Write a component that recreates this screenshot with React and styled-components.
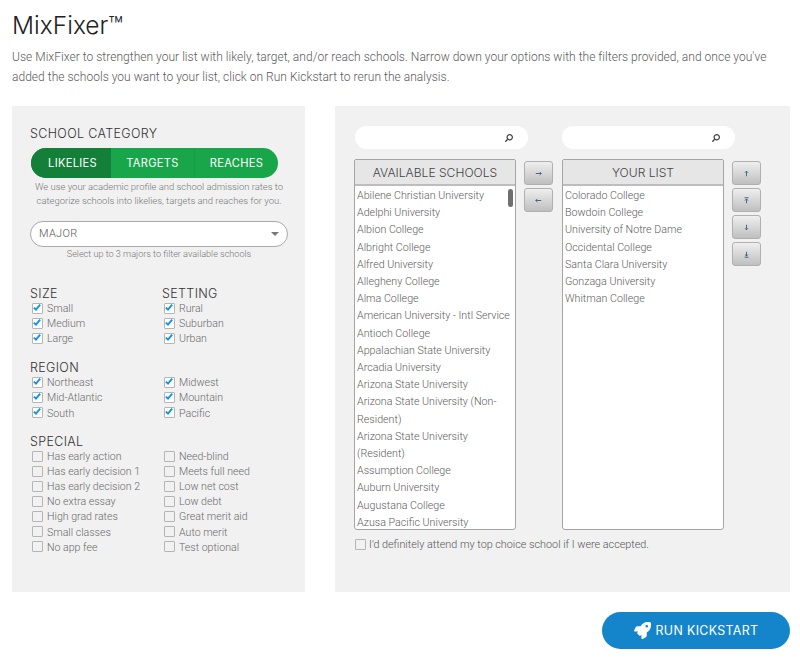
import React from "react";
import styled, { createGlobalStyle } from "styled-components";
import { FaRocket, FaSearch } from "react-icons/fa";

const GlobalStyle = createGlobalStyle`
  html, body {
    margin: 0;
    padding: 0;
    background: #fff;
    font-family: Roboto, "Liberation Sans", sans-serif;
    font-weight: 300;
    color: #555;
  }
`;

const Page = styled.div`
  width: 800px;
  height: 661px;
  padding: 8px 10px 0 12px;
  box-sizing: border-box;
  overflow: hidden;
`;

const Title = styled.h1`
  margin: 0;
  font-family: Inter, sans-serif;
  font-weight: 300;
  font-size: 24.5px;
  line-height: 34px;
  color: #222;
`;

const Intro = styled.p`
  margin: 6px 0 0;
  font-size: 12px;
  line-height: 19.5px;
  letter-spacing: 0.03px;
  color: #5a5a5a;
`;

const Columns = styled.div`
  display: flex;
  gap: 30px;
  margin-top: 19px;
`;

const Panel = styled.section`
  background: #f1f1f1;
  height: 486px;
  box-sizing: border-box;
`;

const FilterPanel = styled(Panel)`
  width: 293px;
  padding: 20px 17px 0 18px;
`;

const SchoolsPanel = styled(Panel)`
  width: 455px;
  padding: 20px 19px 0 19px;
`;

const Heading = styled.h3`
  margin: 0;
  font-family: Inter, sans-serif;
  font-weight: 300;
  font-size: 12.5px;
  line-height: 15px;
  letter-spacing: 0.35px;
  color: #333;
`;

const Segments = styled.div`
  display: flex;
  width: 247px;
  height: 30px;
  margin: 7px 0 0 1px;
  border-radius: 15px;
  overflow: hidden;
  background: #19a64a;
`;

const Segment = styled.div`
  width: ${(p) => p.$width}px;
  display: flex;
  align-items: center;
  justify-content: center;
  padding-left: ${(p) => (p.$active ? 3 : 0)}px;
  box-sizing: border-box;
  background: ${(p) => (p.$active ? "#147f38" : "transparent")};
  border-left: ${(p) => (p.$divider ? "1px solid #179a44" : "none")};
  color: #fff;
  font-family: Inter, sans-serif;
  font-size: 11.1px;
  font-weight: 400;
  letter-spacing: 0.3px;
`;

const Hint = styled.p`
  margin: ${(p) => p.$top}px 0 0;
  width: 258px;
  text-align: center;
  font-size: ${(p) => p.$size}px;
  line-height: 14px;
  color: #777;
`;

const Select = styled.div`
  width: 258px;
  height: 26px;
  margin-top: 13px;
  padding: 0 9px 2px 8px;
  display: flex;
  align-items: center;
  justify-content: space-between;
  box-sizing: border-box;
  background: #fff;
  border: 1px solid #aaa;
  border-radius: 13px;
  font-size: 11px;
  letter-spacing: 0.3px;
  color: #555;
`;

const Caret = styled.span`
  width: 0;
  height: 0;
  margin: 2px -1px 0 0;
  border-left: 4px solid transparent;
  border-right: 4px solid transparent;
  border-top: 4px solid #777;
`;

const FilterGrid = styled.div`
  display: grid;
  grid-template-columns: 132px 1fr;
  margin-top: ${(p) => p.$top}px;
`;

const CheckRow = styled.label`
  display: flex;
  align-items: center;
  height: 15.1px;
  font-size: 10.6px;
  color: #6a6a6a;
`;

const Box = styled.span`
  flex: none;
  width: 9px;
  height: 9px;
  margin: -1px 4px 0 2px;
  display: flex;
  background: ${(p) => (p.$checked ? "#fff" : "#f1f1f1")};
  border: 1px solid #b5b5b5;
  border-radius: 1px;
`;

const Tick = ({ checked }) => (
  <Box $checked={checked}>
    {checked && (
      <svg width="11" height="10" viewBox="0 0 11 10" style={{ margin: "-1px 0 0 -1px" }}>
        <path d="M2 4.6 L4.4 6.8 L9 1.4" fill="none" stroke="#1492e6" strokeWidth="2.1" />
      </svg>
    )}
  </Box>
);

const Check = ({ label, checked }) => (
  <CheckRow>
    <Tick checked={checked} />
    {label}
  </CheckRow>
);

const Filters = ({ top, title, title2, rows, checked }) => (
  <FilterGrid $top={top}>
    <Heading>{title}</Heading>
    <Heading>{title2 || ""}</Heading>
    {rows.flat().map((label) => (
      <Check key={label} label={label} checked={checked} />
    ))}
  </FilterGrid>
);

const SearchRow = styled.div`
  display: flex;
  gap: 34px;
  margin-left: 1px;
`;

const SearchBox = styled.div`
  width: 173px;
  height: 23px;
  padding-right: 15px;
  box-sizing: border-box;
  display: flex;
  align-items: center;
  justify-content: flex-end;
  background: #fff;
  border-radius: 12px;
  color: #444;
  font-size: 8px;
  svg {
    transform: scaleX(-1);
  }
`;

const ListRow = styled.div`
  display: flex;
  margin-top: 10px;
`;

const ListBox = styled.div`
  position: relative;
  width: 162px;
  height: 371px;
  box-sizing: border-box;
  background: #fff;
  border: 1px solid #a5a5a5;
  border-radius: 2px 2px 3px 3px;
  overflow: hidden;
`;

const ListHead = styled.div`
  height: 26px;
  display: flex;
  align-items: center;
  justify-content: center;
  background: #e6e6e6;
  border-bottom: 2px solid #bdbdbd;
  box-sizing: border-box;
  font-family: Inter, sans-serif;
  font-size: 12.1px;
  font-weight: 300;
  color: #444;
`;

const Items = styled.ul`
  list-style: none;
  margin: 0;
  padding: 1px 4px 0 2px;
  font-size: 10.7px;
  line-height: 17.2px;
  color: #5c5c5c;
`;

const Scrollbar = styled.div`
  position: absolute;
  top: 29px;
  right: 2px;
  width: 5px;
  height: 18px;
  border-radius: 3px;
  background: #6f6f6f;
`;

const ButtonStack = styled.div`
  display: flex;
  flex-direction: column;
  gap: 3px;
  margin: 2px 9px 0 8px;
`;

const MoveButton = styled.div`
  width: 29px;
  height: 24px;
  display: flex;
  align-items: center;
  justify-content: center;
  box-sizing: border-box;
  border: 1px solid #b0b0b0;
  border-radius: 3px;
  background: linear-gradient(#efefef, #bfbfbf);
`;

const Arrow = ({ d }) => (
  <svg width="7" height="7" viewBox="0 0 9 9" fill="none" stroke="#3f5f80" strokeWidth="1.2">
    <path d={d} />
  </svg>
);

const AcceptRow = styled(CheckRow)`
  height: auto;
  margin-top: 8px;
  color: #555;
  font-size: 10.8px;
`;

const LargeBox = styled(Box)`
  margin: 0 3px 0 1px;
`;

const Footer = styled.div`
  display: flex;
  justify-content: flex-end;
  margin-top: 20px;
`;

const RunButton = styled.div`
  width: 188px;
  height: 37px;
  display: flex;
  align-items: center;
  justify-content: center;
  gap: 5px;
  box-sizing: border-box;
  border-radius: 19px;
  background: #1585cb;
  color: #fff;
  font-family: Inter, sans-serif;
  font-size: 12.4px;
  font-weight: 400;
  letter-spacing: 0.35px;
`;

const available = [
  "Abilene Christian University",
  "Adelphi University",
  "Albion College",
  "Albright College",
  "Alfred University",
  "Allegheny College",
  "Alma College",
  "American University - Intl Service",
  "Antioch College",
  "Appalachian State University",
  "Arcadia University",
  "Arizona State University",
  "Arizona State University (Non-Resident)",
  "Arizona State University (Resident)",
  "Assumption College",
  "Auburn University",
  "Augustana College",
  "Azusa Pacific University",
];

const chosen = [
  "Colorado College",
  "Bowdoin College",
  "University of Notre Dame",
  "Occidental College",
  "Santa Clara University",
  "Gonzaga University",
  "Whitman College",
];

const arrows = {
  right: "M1 4.5H8M6 2.5L8 4.5L6 6.5",
  left: "M8 4.5H1M3 2.5L1 4.5L3 6.5",
  up: "M4.5 8V1.5M2.5 3.5L4.5 1.5L6.5 3.5",
  top: "M2 1H7M4.5 8V2.5M2.5 4.5L4.5 2.5L6.5 4.5",
  down: "M4.5 1V7.5M2.5 5.5L4.5 7.5L6.5 5.5",
  bottom: "M2 8H7M4.5 1V6.5M2.5 4.5L4.5 6.5L6.5 4.5",
};

export default function App() {
  return (
    <Page>
      <GlobalStyle />
      <Title>MixFixer™</Title>
      <Intro>
        Use MixFixer to strengthen your list with likely, target, and/or reach schools. Narrow down your options with the filters provided, and once you've added the schools you want to your list, click on Run Kickstart to rerun the analysis.
      </Intro>
      <Columns>
        <FilterPanel>
          <Heading>SCHOOL CATEGORY</Heading>
          <Segments>
            <Segment $width={80} $active>LIKELIES</Segment>
            <Segment $width={83}>TARGETS</Segment>
            <Segment $width={84} $divider>REACHES</Segment>
          </Segments>
          <Hint $top={2} $size={9.45}>
            We use your academic profile and school admission rates to categorize schools into likelies, targets and reaches for you.
          </Hint>
          <Select>
            MAJOR
            <Caret />
          </Select>
          <Hint $top={0} $size={9.1}>Select up to 3 majors to filter available schools</Hint>
          <Filters
            top={25}
            title="SIZE"
            title2="SETTING"
            checked
            rows={[["Small", "Rural"], ["Medium", "Suburban"], ["Large", "Urban"]]}
          />
          <Filters
            top={14}
            title="REGION"
            checked
            rows={[["Northeast", "Midwest"], ["Mid-Atlantic", "Mountain"], ["South", "Pacific"]]}
          />
          <Filters
            top={13.5}
            title="SPECIAL"
            rows={[
              ["Has early action", "Need-blind"],
              ["Has early decision 1", "Meets full need"],
              ["Has early decision 2", "Low net cost"],
              ["No extra essay", "Low debt"],
              ["High grad rates", "Great merit aid"],
              ["Small classes", "Auto merit"],
              ["No app fee", "Test optional"],
            ]}
          />
        </FilterPanel>
        <SchoolsPanel>
          <SearchRow>
            <SearchBox><FaSearch /></SearchBox>
            <SearchBox><FaSearch /></SearchBox>
          </SearchRow>
          <ListRow>
            <ListBox>
              <ListHead>AVAILABLE SCHOOLS</ListHead>
              <Items>
                {available.map((name) => <li key={name}>{name}</li>)}
              </Items>
              <Scrollbar />
            </ListBox>
            <ButtonStack>
              <MoveButton><Arrow d={arrows.right} /></MoveButton>
              <MoveButton><Arrow d={arrows.left} /></MoveButton>
            </ButtonStack>
            <ListBox>
              <ListHead>YOUR LIST</ListHead>
              <Items>
                {chosen.map((name) => <li key={name}>{name}</li>)}
              </Items>
            </ListBox>
            <ButtonStack>
              <MoveButton><Arrow d={arrows.up} /></MoveButton>
              <MoveButton><Arrow d={arrows.top} /></MoveButton>
              <MoveButton><Arrow d={arrows.down} /></MoveButton>
              <MoveButton><Arrow d={arrows.bottom} /></MoveButton>
            </ButtonStack>
          </ListRow>
          <AcceptRow>
            <LargeBox />
            I'd definitely attend my top choice school if I were accepted.
          </AcceptRow>
        </SchoolsPanel>
      </Columns>
      <Footer>
        <RunButton>
          <FaRocket size={17} />
          RUN KICKSTART
        </RunButton>
      </Footer>
    </Page>
  );
}
